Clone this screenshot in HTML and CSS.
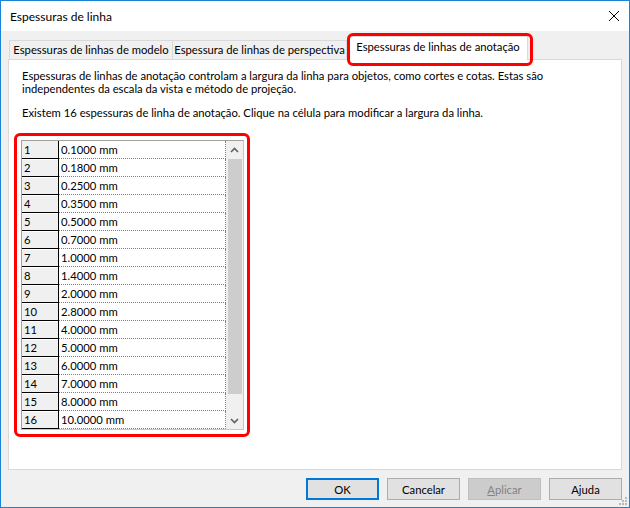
FILE: index.html
```html
<!DOCTYPE html>
<html>
<head>
<meta charset="utf-8">
<title>Espessuras de linha</title>
<link rel="stylesheet" href="styles.css">
</head>
<body>
<div class="window">
  <div class="titlebar">
    <span class="title">Espessuras de linha</span>
    <svg class="close" width="12" height="12" viewBox="0 0 12 12"><path d="M1 1L11 11M11 1L1 11" stroke="#000" stroke-width="1" fill="none"/></svg>
  </div>
  <div class="content">
    <div class="tabs">
      <div class="tab t1">Espessuras de linhas de modelo</div>
      <div class="tab t2">Espessura de linhas de perspectiva</div>
      <div class="tab t3">Espessuras de linhas de anotação</div>
    </div>
    <div class="panel">
      <p class="desc">Espessuras de linhas de anotação controlam a largura da linha para objetos, como cortes e cotas. Estas são<br>independentes da escala da vista e método de projeção.</p>
      <p class="info">Existem 16 espessuras de linha de anotação. Clique na célula para modificar a largura da linha.</p>
      <div class="highlight">
        <div class="grid">
          <div class="rows">
            <div class="row"><div class="num">1</div><div class="val">0.1000 mm</div></div>
            <div class="row"><div class="num">2</div><div class="val">0.1800 mm</div></div>
            <div class="row"><div class="num">3</div><div class="val">0.2500 mm</div></div>
            <div class="row"><div class="num">4</div><div class="val">0.3500 mm</div></div>
            <div class="row"><div class="num">5</div><div class="val">0.5000 mm</div></div>
            <div class="row"><div class="num">6</div><div class="val">0.7000 mm</div></div>
            <div class="row"><div class="num">7</div><div class="val">1.0000 mm</div></div>
            <div class="row"><div class="num">8</div><div class="val">1.4000 mm</div></div>
            <div class="row"><div class="num">9</div><div class="val">2.0000 mm</div></div>
            <div class="row"><div class="num">10</div><div class="val">2.8000 mm</div></div>
            <div class="row"><div class="num">11</div><div class="val">4.0000 mm</div></div>
            <div class="row"><div class="num">12</div><div class="val">5.0000 mm</div></div>
            <div class="row"><div class="num">13</div><div class="val">6.0000 mm</div></div>
            <div class="row"><div class="num">14</div><div class="val">7.0000 mm</div></div>
            <div class="row"><div class="num">15</div><div class="val">8.0000 mm</div></div>
            <div class="row"><div class="num">16</div><div class="val">10.0000 mm</div></div>
          </div>
          <div class="scroll">
            <div class="arrow"><svg width="9" height="6" viewBox="0 0 9 6"><path d="M1 5L4.5 1.5L8 5" stroke="#606060" stroke-width="1.6" fill="none"/></svg></div>
            <div class="track"><div class="thumb"></div></div>
            <div class="arrow"><svg width="9" height="6" viewBox="0 0 9 6"><path d="M1 1L4.5 4.5L8 1" stroke="#606060" stroke-width="1.6" fill="none"/></svg></div>
          </div>
        </div>
      </div>
    </div>
    <div class="buttons">
      <button class="btn default">OK</button>
      <button class="btn">Cancelar</button>
      <button class="btn disabled"><span class="u">A</span>plicar</button>
      <button class="btn">Ajuda</button>
    </div>
  </div>
  <svg class="grip" width="8" height="8" viewBox="0 0 8 8"><g fill="#b8b8b8"><rect x="6" y="0" width="2" height="2"/><rect x="3" y="3" width="2" height="2"/><rect x="6" y="3" width="2" height="2"/><rect x="0" y="6" width="2" height="2"/><rect x="3" y="6" width="2" height="2"/><rect x="6" y="6" width="2" height="2"/></g></svg>
</div>
</body>
</html>
```

FILE: styles.css
```css
* { box-sizing: border-box; }
html, body { margin: 0; padding: 0; }
body {
  width: 630px;
  height: 508px;
  font-family: Lato, "Liberation Sans", sans-serif;
  font-size: 11.25px;
  color: #000;
  background: #fff;
}
.window {
  width: 630px;
  height: 508px;
  border: 1px solid #1883d7;
  display: flex;
  flex-direction: column;
  background: #f0f0f0;
  position: relative;
}
.titlebar {
  height: 30px;
  flex: none;
  background: #fff;
  display: flex;
  align-items: center;
  justify-content: space-between;
  padding: 0 9px 0 9px;
}
.title { font-size: 12px; }
.close { display: block; }
.content {
  flex: 1;
  display: flex;
  flex-direction: column;
}
.tabs {
  display: flex;
  align-items: flex-end;
  height: 28px;
  padding-left: 8px;
  flex: none;
}
.tab {
  height: 19px;
  border: 1px solid #d9d9d9;
  border-bottom: none;
  background: #f0f0f0;
  text-align: center;
  line-height: 18px;
  white-space: nowrap;
}
.t1 { width: 164px; }
.t2 { width: 174px; border-left: none; }
.t3 {
  width: 180px;
  height: 24px;
  margin-left: 1px;
  margin-bottom: -1px;
  background: #fff;
  position: relative;
  z-index: 1;
  line-height: 20px;
  padding-bottom: 3px;
}
.t3::after {
  content: "";
  position: absolute;
  left: -2px;
  right: -6px;
  top: -4px;
  bottom: -6px;
  border: 3px solid #f00;
  border-radius: 6px;
}
.panel {
  margin-left: 7px;
  width: 614px;
  height: 411px;
  flex: none;
  border: 1px solid #d9d9d9;
  background: #fff;
  padding: 9px 13px 0 13px;
}
.desc { margin: 0; line-height: 13px; }
.info { margin: 11px 0 0; line-height: 13px; }
.highlight {
  margin: 14px 0 0 -8px;
  width: fit-content;
  border: 3px solid #f00;
  border-radius: 6px;
  padding: 4px 3px 4px 4px;
}
.grid {
  display: flex;
  border: 1px solid #a0a0a0;
  border-right-color: #c8c8c8;
  border-bottom-color: #c8c8c8;
}
.rows { display: flex; flex-direction: column; }
.row { display: flex; height: 18px; }
.num {
  width: 37px;
  background: #f0f0f0;
  border-right: 1px solid #000;
  border-bottom: 1px solid #000;
  padding-left: 2px;
  line-height: 17px;
}
.row + .row .num { box-shadow: inset 0 1px #fff; }
.val {
  width: 167px;
  border-right: 1px dotted #808080;
  border-bottom: 1px dotted #808080;
  padding-left: 2px;
  line-height: 17px;
}
.scroll {
  width: 17px;
  background: #f0f0f0;
  display: flex;
  flex-direction: column;
}
.arrow {
  height: 17px;
  flex: none;
  display: flex;
  align-items: center;
  justify-content: center;
}
.arrow svg { display: block; }
.track { flex: 1; padding: 1px 1px 0 2px; }
.thumb { height: 235px; background: #cdcdcd; }
.buttons {
  display: flex;
  justify-content: flex-end;
  gap: 8px;
  padding: 8px 7px 0 0;
}
.btn {
  width: 73px;
  height: 22px;
  border: 1px solid #adadad;
  background: #e1e1e1;
  font: inherit;
  color: #000;
  padding: 0;
  margin: 0;
  display: flex;
  align-items: center;
  justify-content: center;
}
.btn.default { border: 2px solid #0078d7; }
.btn.disabled { background: #cccccc; border-color: #bfbfbf; color: #838383; }
.u { text-decoration: underline; }
.grip {
  position: absolute;
  right: 2px;
  bottom: 2px;
}
```
